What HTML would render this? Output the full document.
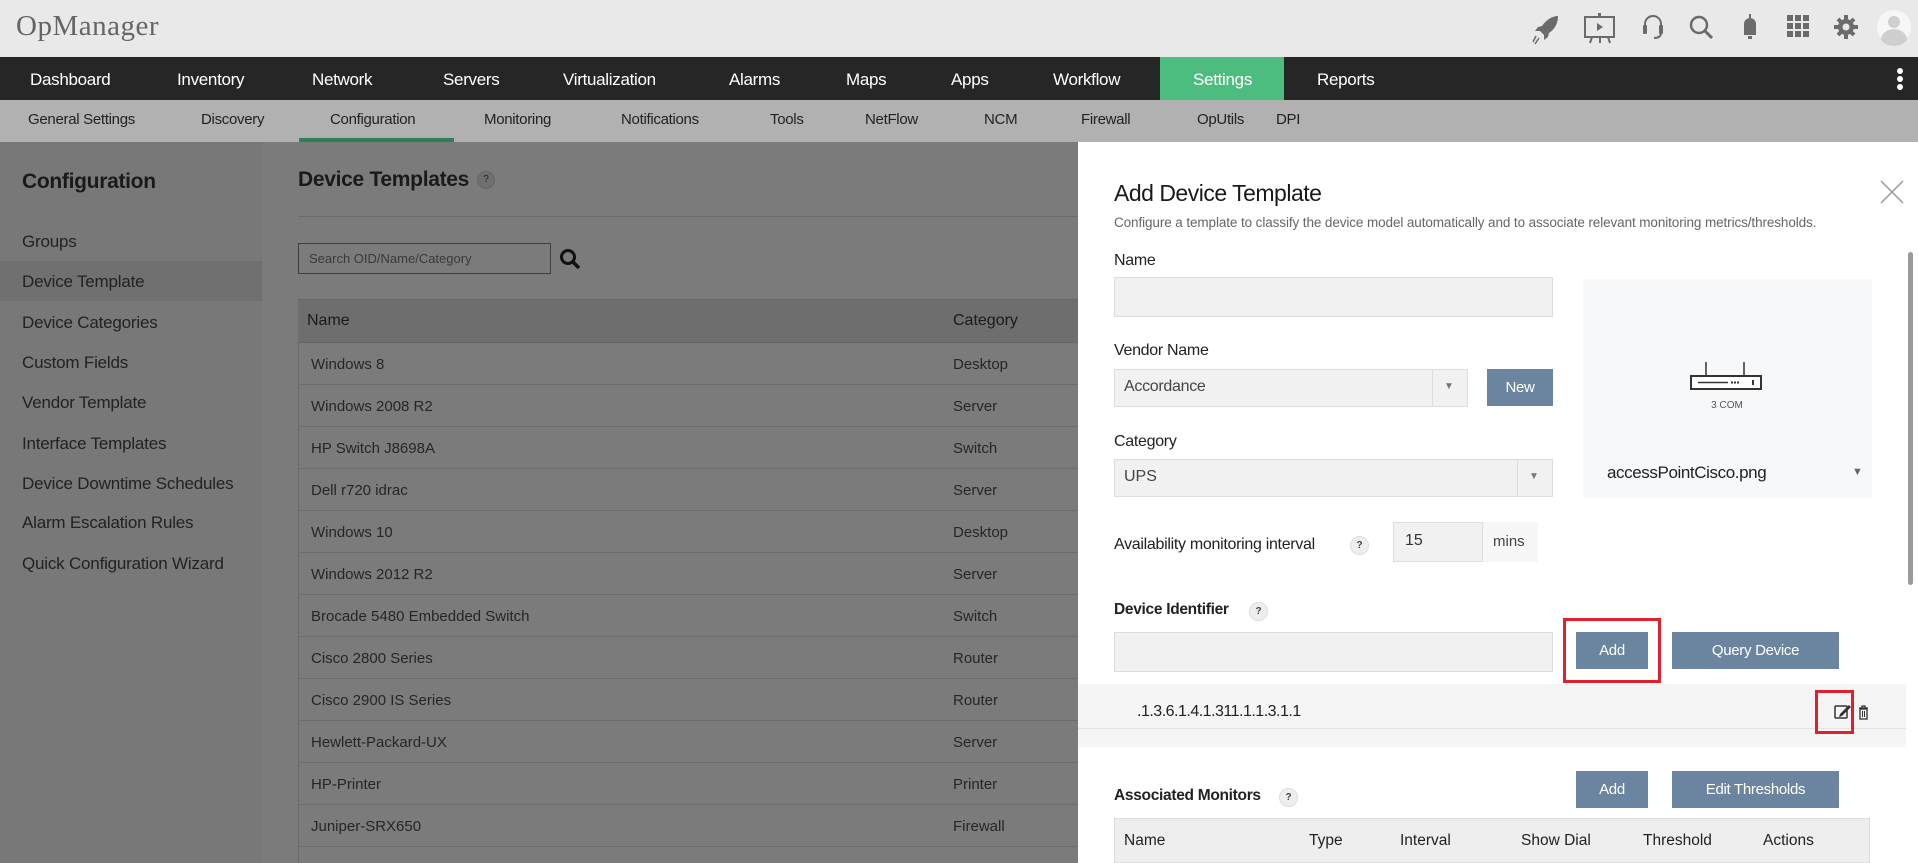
<!DOCTYPE html>
<html><head><meta charset="utf-8"><style>
*{margin:0;padding:0;box-sizing:border-box}
body{width:1918px;height:863px;overflow:hidden;position:relative;font-family:"Liberation Sans",sans-serif;background:#7b7b7b}
.a{position:absolute;white-space:nowrap}
.nav span{position:absolute;top:1px;line-height:43px;color:#fff;font-size:17px;letter-spacing:-0.3px}
.sub span{position:absolute;top:-1px;line-height:42px;color:#222;font-size:15px;letter-spacing:-0.3px}
.side{font-size:17px;color:#222;letter-spacing:-0.2px}
.row{position:absolute;left:298px;width:780px;height:42px;border-bottom:1px solid #6c6c6c;font-size:15px;color:#262626}
.row span{position:absolute;line-height:44px}
.btn{position:absolute;background:#6b84a0;color:#fff;font-size:15px;text-align:center;letter-spacing:-0.3px}
.q{display:inline-block;width:19px;height:19px;border-radius:50%;background:#eee;border:1px solid #ddd;font-size:10px;text-align:center;line-height:17px;color:#444;font-weight:bold}
.lbl{font-size:16px;color:#222;letter-spacing:-0.3px}
.inp{position:absolute;background:#f1f1f1;border:1px solid #ddd}
</style></head><body>
<div class="a" style="left:0;top:0;width:1918px;height:57px;background:#e9e9e9"></div>
<div class="a" style="left:16px;top:10px;font-family:'Liberation Serif',serif;font-size:29px;color:#666;letter-spacing:0.5px">OpManager</div>
<svg class="a" style="left:1530px;top:10px" width="388" height="38" viewBox="1530 10 388 38" fill="#6b6b6b">
<path d="M1558 16 C1552 16 1546 20 1542 26 L1538 27 L1535 31 L1540 31 L1544 35 L1544 40 L1548 37 L1549 33 C1555 29 1558 23 1558 16Z"/>
<path d="M1536 36 L1533 42 M1539 38 L1535 44" stroke="#6b6b6b" stroke-width="1.5"/>
<rect x="1585" y="17" width="29" height="20" fill="none" stroke="#6b6b6b" stroke-width="2"/><rect x="1598" y="13" width="3" height="4"/><path d="M1597 23 L1603 27 L1597 31Z"/><path d="M1592 37 L1590 43 M1608 37 L1610 43 M1600 37 V43" stroke="#6b6b6b" stroke-width="2"/>
<path d="M1645 29 V24 A8 8 0 0 1 1661 24 V29" fill="none" stroke="#6b6b6b" stroke-width="2"/><rect x="1643" y="25" width="4" height="9" rx="1"/><rect x="1659" y="25" width="4" height="9" rx="1"/><path d="M1661 34 Q1660 38 1654 38" fill="none" stroke="#6b6b6b" stroke-width="2"/>
<circle cx="1699" cy="25" r="8" fill="none" stroke="#6b6b6b" stroke-width="2.5"/><path d="M1705 31 L1712 38" stroke="#6b6b6b" stroke-width="3"/>
<path d="M1744 35 L1744 24 A6 6 0 0 1 1756 24 L1756 35Z"/><rect x="1748" y="36" width="4" height="3"/><rect x="1749" y="14" width="2" height="4"/>
<g><rect x="1787" y="15" width="6" height="6"/><rect x="1795" y="15" width="6" height="6"/><rect x="1803" y="15" width="6" height="6"/><rect x="1787" y="23" width="6" height="6"/><rect x="1795" y="23" width="6" height="6"/><rect x="1803" y="23" width="6" height="6"/><rect x="1787" y="31" width="6" height="6"/><rect x="1795" y="31" width="6" height="6"/><rect x="1803" y="31" width="6" height="6"/></g>
<circle cx="1846" cy="27" r="8"/><g stroke="#6b6b6b" stroke-width="4"><path d="M1846 15 V39 M1834 27 H1858 M1838 19 L1854 35 M1854 19 L1838 35"/></g><circle cx="1846" cy="27" r="3.5" fill="#e9e9e9"/>
<circle cx="1894" cy="27" r="17" fill="#f7f7f7"/><circle cx="1894" cy="22" r="6" fill="#cfcfcf"/><path d="M1881 40 A13 11 0 0 1 1907 40 A17 17 0 0 1 1881 40Z" fill="#cfcfcf"/>
</svg>
<div class="a nav" style="left:0;top:57px;width:1918px;height:43px;background:#262626">
<div class="a" style="left:1160px;top:0;width:124px;height:43px;background:#4cbd7f"></div>
<span style="left:30px">Dashboard</span><span style="left:177px">Inventory</span><span style="left:312px">Network</span><span style="left:443px">Servers</span><span style="left:563px">Virtualization</span><span style="left:729px">Alarms</span><span style="left:846px">Maps</span><span style="left:951px">Apps</span><span style="left:1053px">Workflow</span><span style="left:1193px">Settings</span><span style="left:1317px">Reports</span>
<div class="a" style="left:1897px;top:11px;width:6px;height:6px;border-radius:3px;background:#fff"></div><div class="a" style="left:1897px;top:19px;width:6px;height:6px;border-radius:3px;background:#fff"></div><div class="a" style="left:1897px;top:27px;width:6px;height:6px;border-radius:3px;background:#fff"></div>
</div>
<div class="a sub" style="left:0;top:100px;width:1918px;height:42px;background:#b1b1b1">
<span style="left:28px">General Settings</span><span style="left:201px">Discovery</span><span style="left:330px">Configuration</span><span style="left:484px">Monitoring</span><span style="left:621px">Notifications</span><span style="left:770px">Tools</span><span style="left:865px">NetFlow</span><span style="left:984px">NCM</span><span style="left:1081px">Firewall</span><span style="left:1197px">OpUtils</span><span style="left:1276px">DPI</span>
<div class="a" style="left:299px;top:38px;width:155px;height:4px;background:#2f7e55"></div>
</div>
<div class="a" style="left:0;top:142px;width:262px;height:721px;background:#787878"></div>
<div class="a" style="left:0;top:261px;width:262px;height:40px;background:#707070"></div>
<div class="a" style="left:22px;top:170px;font-size:21px;font-weight:bold;color:#1a1a1a;letter-spacing:-0.3px">Configuration</div>
<div class="a side" style="left:22px;top:232px">Groups</div>
<div class="a side" style="left:22px;top:272px">Device Template</div>
<div class="a side" style="left:22px;top:313px">Device Categories</div>
<div class="a side" style="left:22px;top:353px">Custom Fields</div>
<div class="a side" style="left:22px;top:393px">Vendor Template</div>
<div class="a side" style="left:22px;top:434px">Interface Templates</div>
<div class="a side" style="left:22px;top:474px">Device Downtime Schedules</div>
<div class="a side" style="left:22px;top:513px">Alarm Escalation Rules</div>
<div class="a side" style="left:22px;top:554px">Quick Configuration Wizard</div>
<div class="a" style="left:298px;top:168px;font-size:21px;font-weight:bold;color:#1a1a1a;letter-spacing:-0.3px">Device Templates</div>
<div class="a" style="left:477px;top:171px;width:18px;height:18px;border-radius:50%;background:#6f6f6f;border:1px solid #666;font-size:10px;text-align:center;line-height:16px;color:#222">?</div>
<div class="a" style="left:298px;top:216px;width:780px;height:1px;background:#6c6c6c"></div>
<div class="a" style="left:298px;top:243px;width:253px;height:31px;border:1px solid #3f3f3f;font-size:13px;color:#3a3a3a;line-height:29px;padding-left:10px">Search OID/Name/Category</div>
<svg class="a" style="left:559px;top:248px" width="22" height="22"><circle cx="9" cy="9" r="6.5" fill="none" stroke="#111" stroke-width="3"/><path d="M14 14 L20 20" stroke="#111" stroke-width="3.5"/></svg>
<div class="a" style="left:298px;top:299px;width:780px;height:44px;background:#6e6e6e;border-top:1px solid #666;border-bottom:1px solid #666"></div>
<div class="a" style="left:307px;top:312px;font-size:16px;color:#1a1a1a">Name</div>
<div class="a" style="left:953px;top:312px;font-size:16px;color:#1a1a1a">Category</div>
<div class="a" style="left:298px;top:343px;width:1px;height:520px;background:#6c6c6c"></div>
<div class="row" style="top:343px"><span style="left:13px">Windows 8</span><span style="left:655px">Desktop</span></div>
<div class="row" style="top:385px"><span style="left:13px">Windows 2008 R2</span><span style="left:655px">Server</span></div>
<div class="row" style="top:427px"><span style="left:13px">HP Switch J8698A</span><span style="left:655px">Switch</span></div>
<div class="row" style="top:469px"><span style="left:13px">Dell r720 idrac</span><span style="left:655px">Server</span></div>
<div class="row" style="top:511px"><span style="left:13px">Windows 10</span><span style="left:655px">Desktop</span></div>
<div class="row" style="top:553px"><span style="left:13px">Windows 2012 R2</span><span style="left:655px">Server</span></div>
<div class="row" style="top:595px"><span style="left:13px">Brocade 5480 Embedded Switch</span><span style="left:655px">Switch</span></div>
<div class="row" style="top:637px"><span style="left:13px">Cisco 2800 Series</span><span style="left:655px">Router</span></div>
<div class="row" style="top:679px"><span style="left:13px">Cisco 2900 IS Series</span><span style="left:655px">Router</span></div>
<div class="row" style="top:721px"><span style="left:13px">Hewlett-Packard-UX</span><span style="left:655px">Server</span></div>
<div class="row" style="top:763px"><span style="left:13px">HP-Printer</span><span style="left:655px">Printer</span></div>
<div class="row" style="top:805px"><span style="left:13px">Juniper-SRX650</span><span style="left:655px">Firewall</span></div>
<div class="a" style="left:1078px;top:142px;width:840px;height:721px;background:#fff"></div>
<div class="a" style="left:1114px;top:180px;font-size:23px;color:#1a1a1a;letter-spacing:-0.5px">Add Device Template</div>
<div class="a" style="left:1114px;top:215px;font-size:13.5px;color:#666;letter-spacing:-0.1px">Configure a template to classify the device model automatically and to associate relevant monitoring metrics/thresholds.</div>
<svg class="a" style="left:1880px;top:180px" width="24" height="24"><path d="M1 1 L23 23 M23 1 L1 23" stroke="#999" stroke-width="1.5"/></svg>
<div class="a lbl" style="left:1114px;top:252px">Name</div>
<div class="inp" style="left:1114px;top:277px;width:439px;height:40px"></div>
<div class="a" style="left:1583px;top:279px;width:289px;height:219px;background:#f7f8fa"></div>
<svg class="a" style="left:1690px;top:362px" width="74" height="50"><path d="M16 0 V14 M54 0 V14" stroke="#333" stroke-width="1.5"/><rect x="1" y="14" width="70" height="13" fill="#fff" stroke="#333" stroke-width="2"/><path d="M8 20.5 H38" stroke="#333" stroke-width="1.5"/><path d="M41 20.5 H49" stroke="#333" stroke-width="2" stroke-dasharray="2 1"/><rect x="62" y="18" width="2" height="5" fill="#333"/><text x="37" y="46" font-size="10" fill="#555" text-anchor="middle" font-family="Liberation Sans">3 COM</text></svg>
<div class="a" style="left:1607px;top:463px;font-size:17px;color:#222;letter-spacing:-0.4px">accessPointCisco.png</div>
<div class="a" style="left:1852px;top:466px;font-size:11px;color:#666">▼</div>
<div class="a lbl" style="left:1114px;top:342px">Vendor Name</div>
<div class="inp" style="left:1114px;top:369px;width:354px;height:38px"></div>
<div class="a" style="left:1432px;top:370px;width:1px;height:36px;background:#ddd"></div>
<div class="a" style="left:1124px;top:378px;font-size:16px;color:#444;letter-spacing:-0.3px">Accordance</div>
<div class="a" style="left:1444px;top:381px;font-size:10px;color:#777">▼</div>
<div class="btn" style="left:1487px;top:369px;width:66px;height:37px;line-height:37px">New</div>
<div class="a lbl" style="left:1114px;top:433px">Category</div>
<div class="inp" style="left:1114px;top:459px;width:439px;height:38px"></div>
<div class="a" style="left:1517px;top:460px;width:1px;height:36px;background:#ddd"></div>
<div class="a" style="left:1124px;top:468px;font-size:16px;color:#444">UPS</div>
<div class="a" style="left:1529px;top:471px;font-size:10px;color:#777">▼</div>
<div class="a lbl" style="left:1114px;top:536px">Availability monitoring interval</div>
<div class="a" style="left:1350px;top:535px"><span class="q">?</span></div>
<div class="inp" style="left:1393px;top:522px;width:90px;height:40px"></div>
<div class="a" style="left:1483px;top:522px;width:55px;height:40px;background:#f7f7f7"></div>
<div class="a" style="left:1405px;top:532px;font-size:16px;color:#333">15</div>
<div class="a" style="left:1493px;top:533px;font-size:15px;color:#444">mins</div>
<div class="a lbl" style="left:1114px;top:601px;font-weight:bold;font-size:15.5px">Device Identifier</div>
<div class="a" style="left:1249px;top:601px"><span class="q">?</span></div>
<div class="inp" style="left:1114px;top:632px;width:439px;height:40px"></div>
<div class="btn" style="left:1576px;top:632px;width:72px;height:37px;line-height:37px">Add</div>
<div class="a" style="left:1563px;top:618px;width:98px;height:65px;border:3px solid #e0202a"></div>
<div class="btn" style="left:1672px;top:632px;width:167px;height:37px;line-height:37px">Query Device</div>
<div class="a" style="left:1078px;top:684px;width:828px;height:63px;background:#f5f5f5"></div>
<div class="a" style="left:1078px;top:728px;width:828px;height:1px;background:#e4e4e4"></div>
<div class="a" style="left:1137px;top:703px;font-size:16px;color:#222;letter-spacing:-0.5px">.1.3.6.1.4.1.311.1.1.3.1.1</div>
<svg class="a" style="left:1834px;top:702px" width="36" height="20"><rect x="1" y="4" width="12" height="12" rx="1" fill="none" stroke="#333" stroke-width="1.5"/><path d="M6 12 L15 3 L17 5 L8 14 L5 15Z" fill="#333"/><path d="M25 6 H34 M28 6 V4 H31 V6" stroke="#333" stroke-width="1.3" fill="none"/><rect x="26" y="7" width="7" height="10" fill="none" stroke="#333" stroke-width="1.3"/><path d="M28.5 9 V15 M30.5 9 V15" stroke="#333"/></svg>
<div class="a" style="left:1815px;top:690px;width:39px;height:44px;border:3px solid #e0202a"></div>
<div class="a lbl" style="left:1114px;top:787px;font-weight:bold;font-size:15.5px">Associated Monitors</div>
<div class="a" style="left:1279px;top:787px"><span class="q">?</span></div>
<div class="btn" style="left:1576px;top:771px;width:72px;height:37px;line-height:37px">Add</div>
<div class="btn" style="left:1672px;top:771px;width:167px;height:37px;line-height:37px">Edit Thresholds</div>
<div class="a" style="left:1114px;top:818px;width:756px;height:45px;background:#eee;border:1px solid #ddd"></div>
<div class="a" style="top:832px;left:1124px;font-size:15.5px;color:#222">Name</div>
<div class="a" style="top:832px;left:1309px;font-size:15.5px;color:#222">Type</div>
<div class="a" style="top:832px;left:1400px;font-size:15.5px;color:#222">Interval</div>
<div class="a" style="top:832px;left:1521px;font-size:15.5px;color:#222">Show Dial</div>
<div class="a" style="top:832px;left:1643px;font-size:15.5px;color:#222">Threshold</div>
<div class="a" style="top:832px;left:1763px;font-size:15.5px;color:#222">Actions</div>
<div class="a" style="left:1908px;top:252px;width:5px;height:333px;border-radius:3px;background:#9a9a9a"></div>
</body></html>
